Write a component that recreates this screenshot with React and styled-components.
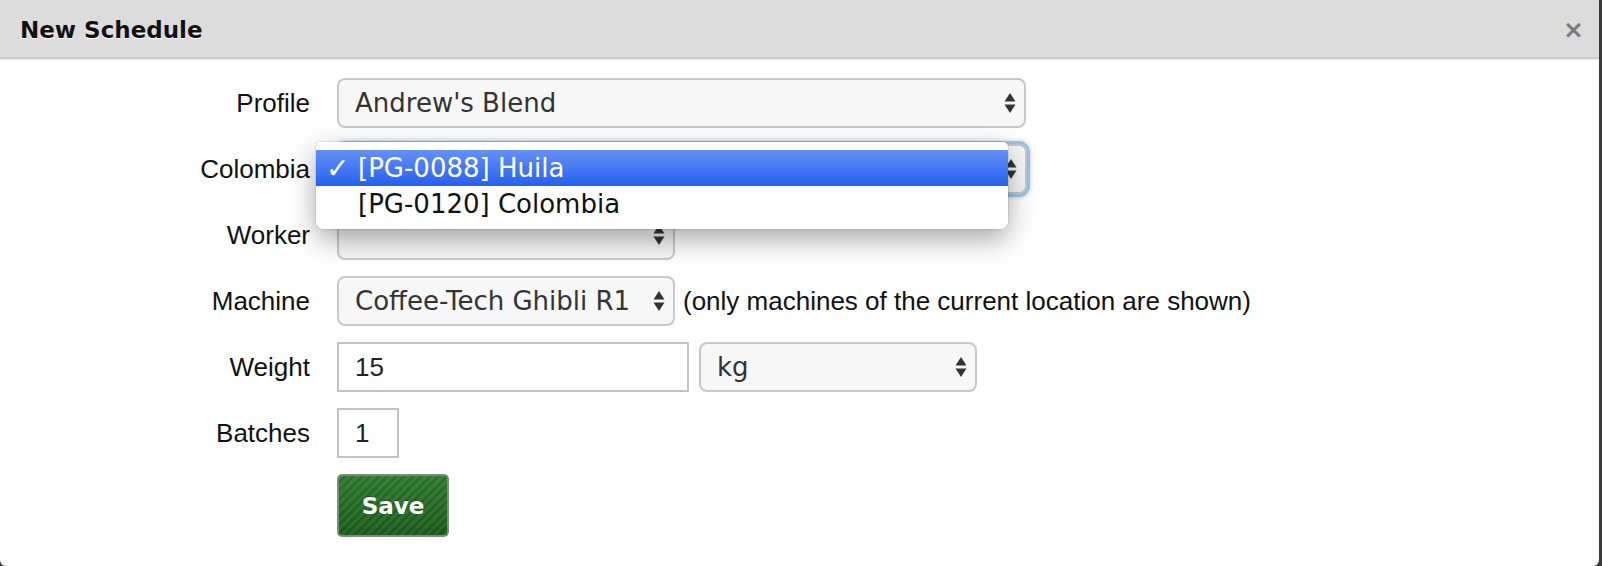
import styled, { createGlobalStyle } from "styled-components";

const GlobalStyle = createGlobalStyle`
  html, body {
    margin: 0;
    padding: 0;
    background: #3a3a3a;
  }
  #root {
    height: 566px;
  }
`;

const Arrows = () => (
  <svg width="12" height="22" viewBox="0 0 12 22">
    <path d="M6 1 L11.5 9.5 L0.5 9.5 Z" fill="#333" />
    <path d="M0.5 12.5 L11.5 12.5 L6 21 Z" fill="#333" />
  </svg>
);

const App = () => {
  return (
    <>
      <GlobalStyle />
      <Modal>
        <Header>
          <Title>New Schedule</Title>
          <Close>×</Close>
        </Header>
        <Form>
          <Row>
            <Label>Profile</Label>
            <Select width={689}>
              <SelectText>Andrew's Blend</SelectText>
              <Arrows />
            </Select>
          </Row>
          <Row>
            <Label>Colombia</Label>
            <Select width={690} focused>
              <SelectText />
              <Arrows />
            </Select>
            <Dropdown>
              <Option selected>
                <Check>✓</Check>[PG-0088] Huila
              </Option>
              <Option>
                <Check />[PG-0120] Colombia
              </Option>
            </Dropdown>
          </Row>
          <Row>
            <Label>Worker</Label>
            <Select width={338}>
              <SelectText />
              <Arrows />
            </Select>
          </Row>
          <Row>
            <Label>Machine</Label>
            <Select width={338}>
              <SelectText>Coffee-Tech Ghibli R1</SelectText>
              <Arrows />
            </Select>
            <Hint>(only machines of the current location are shown)</Hint>
          </Row>
          <Row>
            <Label>Weight</Label>
            <TextBox width={352}>15</TextBox>
            <Select width={278} spaced>
              <SelectText>kg</SelectText>
              <Arrows />
            </Select>
          </Row>
          <Row>
            <Label>Batches</Label>
            <TextBox width={62}>1</TextBox>
          </Row>
          <Row>
            <Label />
            <SaveButton>Save</SaveButton>
          </Row>
        </Form>
      </Modal>
    </>
  );
};

export default App;

const Modal = styled.div`
  width: 1599px;
  height: 566px;
  background: #fff;
  border-radius: 0 0 6px 6px;
  overflow: hidden;
  display: flex;
  flex-direction: column;
`;

const Header = styled.div`
  height: 59px;
  flex-shrink: 0;
  box-sizing: border-box;
  background: #dcdcdc;
  border-bottom: 2px solid #c8c8c8;
  box-shadow: 0 2px 0 #f3f3f3;
  display: flex;
  align-items: center;
  justify-content: space-between;
  padding: 2px 15px 0 20px;
`;

const Title = styled.div`
  font-family: "DejaVu Sans", sans-serif;
  font-weight: bold;
  font-size: 23px;
  color: #111;
  text-shadow: 0 1px 0 #fff;
`;

const Close = styled.div`
  font-family: "DejaVu Sans", sans-serif;
  font-weight: bold;
  font-size: 25px;
  color: #7a7a7a;
`;

const Form = styled.div`
  display: flex;
  flex-direction: column;
  gap: 16px;
  padding-top: 19px;
`;

const Row = styled.div`
  position: relative;
  display: flex;
  align-items: center;
  gap: 8px;
`;

const Label = styled.div`
  width: 310px;
  margin-right: 19px;
  text-align: right;
  font-family: "Liberation Sans", Arial, sans-serif;
  font-size: 26px;
  color: #111;
`;

const Select = styled.div`
  width: ${(p) => p.width}px;
  height: 50px;
  margin-left: ${(p) => (p.spaced ? "2px" : "0")};
  box-sizing: border-box;
  display: flex;
  align-items: center;
  justify-content: space-between;
  padding: 0 8px 0 16px;
  background: #f7f7f7;
  border: 2px solid #c8c8c8;
  border-radius: 8px;
  box-shadow: ${(p) =>
    p.focused ? "0 0 0 3px #9cc1e6, 0 0 5px 3px #b7d3ef" : "none"};
`;

const SelectText = styled.span`
  font-family: "DejaVu Sans", sans-serif;
  font-size: 26px;
  color: #333;
  white-space: nowrap;
`;

const TextBox = styled.div`
  width: ${(p) => p.width}px;
  height: 50px;
  box-sizing: border-box;
  display: flex;
  align-items: center;
  padding: 0 16px;
  background: #fff;
  border: 2px solid #c2c2c2;
  font-family: "Liberation Sans", Arial, sans-serif;
  font-size: 26px;
  color: #222;
`;

const Hint = styled.span`
  font-family: "Liberation Sans", Arial, sans-serif;
  font-size: 26px;
  color: #111;
  white-space: nowrap;
`;

const Dropdown = styled.div`
  position: absolute;
  left: 316px;
  top: -2px;
  width: 692px;
  height: 87px;
  box-sizing: border-box;
  padding-top: 8px;
  background: rgba(255, 255, 255, 0.98);
  border-radius: 5px 5px 8px 8px;
  box-shadow: 0 10px 28px rgba(0, 0, 0, 0.35), 0 0 0 1px rgba(0, 0, 0, 0.08);
  z-index: 2;
`;

const Option = styled.div`
  height: 36px;
  display: flex;
  align-items: center;
  font-family: "DejaVu Sans", sans-serif;
  font-size: 26px;
  color: ${(p) => (p.selected ? "#fff" : "#111")};
  background: ${(p) =>
    p.selected ? "linear-gradient(#6590f6, #2560ee)" : "transparent"};
`;

const Check = styled.span`
  width: 42px;
  padding-left: 10px;
  box-sizing: border-box;
  font-size: 28px;
  font-weight: bold;
`;

const SaveButton = styled.div`
  width: 112px;
  height: 63px;
  box-sizing: border-box;
  display: flex;
  align-items: center;
  justify-content: center;
  border: 2px solid #7d8a7d;
  border-radius: 5px;
  background: repeating-linear-gradient(
      135deg,
      rgba(255, 255, 255, 0.06) 0 3px,
      rgba(0, 0, 0, 0.06) 3px 6px
    ),
    linear-gradient(#2f7a2f, #1b5c1b);
  font-family: "DejaVu Sans", sans-serif;
  font-weight: bold;
  font-size: 23px;
  color: #fff;
  text-shadow: 0 -1px 0 rgba(0, 0, 0, 0.3);
`;
